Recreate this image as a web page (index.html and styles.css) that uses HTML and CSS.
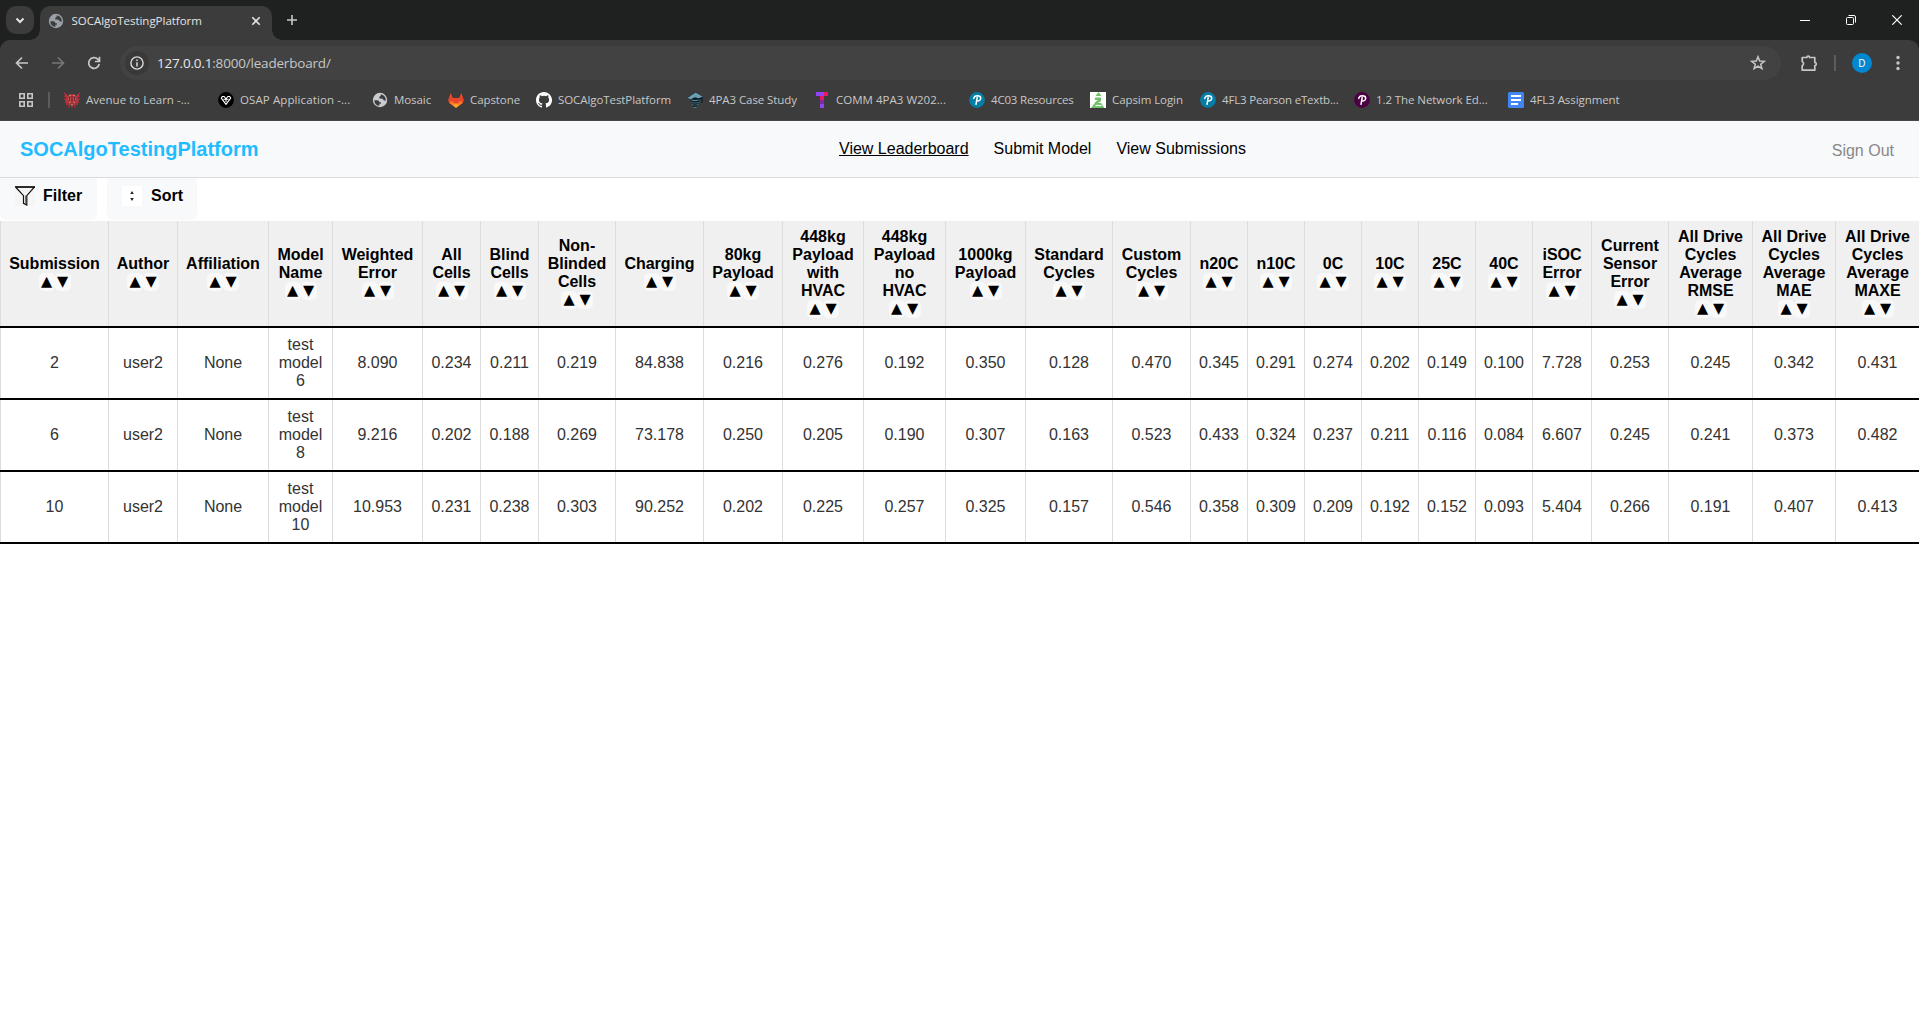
FILE: index.html
```html
<!DOCTYPE html>
<html lang="en">
<head>
<meta charset="utf-8">
<title>SOCAlgoTestingPlatform</title>
<link rel="stylesheet" href="styles.css">
</head>
<body>
<svg class="defs" width="0" height="0">
  <symbol id="globe" viewBox="0 0 16 16"><circle cx="8" cy="8" r="7.2" fill="currentColor"/><path d="M2.200 8.200h2.900q2.300 0 2.300 2.100h1.500v1.500H7.400v2Q2.800 13.500 2.200 8.200zM8.800 2.200v1.100q0 1.400-1.500 1.500v1.700h2.500q1.400 0 1.600 1.600l2.300.8Q14.400 3.800 8.800 2.200z" fill="#3c3c3c"/></symbol>
  <symbol id="pearson" viewBox="0 0 16 16"><circle cx="8" cy="8" r="7.900" fill="currentColor"/><path d="M4.800 6.500c.3-2 1.700-2.700 3.500-2.700 2.100 0 3.400.8 3.400 2.500 0 1.900-1.700 2.900-3.800 2.800M8.200 5.500 7 12.300" fill="none" stroke="#fff" stroke-width="1.500" stroke-linecap="round"/></symbol>
</svg>

<div class="browser">
  <div class="tabstrip">
    <div class="tab-search"><svg width="28" height="28"><path d="m10.500 12.500 3.500 3.500 3.500-3.500" fill="none" stroke="#e3e3e3" stroke-width="2"/></svg></div>
    <div class="tab">
      <svg class="tab-icon" width="16" height="16"><use href="#globe"/></svg>
      <span class="tab-title">SOCAlgoTestingPlatform</span>
      <svg class="tab-close" width="10" height="10"><path d="m1.300 1.300 7.400 7.400m0-7.400-7.400 7.400" stroke="#e3e3e3" stroke-width="1.600"/></svg>
    </div>
    <svg class="new-tab" width="12" height="12"><path d="M6 1v10M1 6h10" stroke="#c7c7c7" stroke-width="1.600"/></svg>
    <div class="window-controls">
      <svg width="10" height="10"><path d="M0 5.500h10" stroke="#fff"/></svg>
      <svg width="10" height="10" fill="none" stroke="#fff"><rect x=".5" y="2.500" width="7" height="7" rx="1"/><path d="M2.500.5H8q1.500 0 1.500 1.500v5.500"/></svg>
      <svg width="10" height="10"><path d="m.3.300 9.400 9.400m0-9.400-9.400 9.400" stroke="#fff" stroke-width="1.200"/></svg>
    </div>
  </div>
  <div class="toolbar">
    <svg class="tool back" width="14" height="14" fill="none" stroke="#c7c7c7" stroke-width="1.700"><path d="M13 7H2M7 1.500 1.500 7 7 12.500"/></svg>
    <svg class="tool forward" width="14" height="14" fill="none" stroke="#777" stroke-width="1.700"><path d="M1 7h11M7 1.500 12.500 7 7 12.500"/></svg>
    <svg class="tool reload" width="14" height="14" fill="none" stroke="#c7c7c7" stroke-width="1.700"><path d="M12.200 8A5.300 5.300 0 1 1 10.900 3.400L12.300 5M12.500.8V5.500H8"/></svg>
    <div class="address">
      <div class="info"><svg width="14" height="14"><circle cx="7" cy="7" r="6.100" fill="none" stroke="#dadada" stroke-width="1.400"/><path d="M7 6.200v4.200M7 3.600v1.500" stroke="#dadada" stroke-width="1.500"/></svg></div>
      <span class="url"><span class="host">127.0.0.1</span>:8000/leaderboard/</span>
      <svg class="star" width="16" height="16"><path d="m8 1.700 1.700 4.300 4.600.3-3.600 2.900 1.200 4.500L8 11.200l-3.900 2.500 1.200-4.500L1.700 6.300 6.300 6z" fill="none" stroke="#c7c7c7" stroke-width="1.500"/></svg>
    </div>
    <svg class="puzzle" width="18" height="18"><path d="M2.200 3.500h4.600a1.400 1.400 0 0 1 2.800 0h5.200v5a1.400 1.400 0 0 1 0 3v4.700H2.200v-4.500a2.300 2.300 0 0 0 0-4.200z" fill="none" stroke="#c7c7c7" stroke-width="1.700" stroke-linejoin="round"/></svg>
    <span class="divider"></span>
    <span class="avatar">D</span>
    <svg class="kebab" width="4" height="16" fill="#c7c7c7"><circle cx="2" cy="2.500" r="1.700"/><circle cx="2" cy="8" r="1.700"/><circle cx="2" cy="13.500" r="1.700"/></svg>
  </div>
  <div class="bookmarks">
    <svg class="apps" width="14" height="14" fill="none" stroke="#c7c7c7" stroke-width="1.600"><path d="M.8.800h4.400v4.400H.8zM8.800.800h4.400v4.400H8.800zM.8 8.800h4.400v4.400H.8zM8.800 8.800h4.400v4.400H8.800z"/></svg>
    <span class="divider"></span>
    <div class="bookmark wide"><svg width="16" height="16"><path d="M1 1l3 3 2-2h4l2 2 3-3v4l-2 1 2 2-1 4-3-1 1 3-3-1-1 1-1-1-3 1 1-3-3 1-1-4 2-2-2-1z" fill="#a83b40"/><path d="M0 1l3 2M16 1l-3 2M0 4l3 1M16 4l-3 1M0 7h3M13 7h3M1 10h2M13 10h2M2 13l3-2M14 13l-3-2M5 16v-2M11 16v-2M8 16v-2" stroke="#d3233d"/><path d="M5 3.500h2M9 3.500h2M4 7h3M9 7h3M5 10h6M7 13h2" stroke="#dc7950"/><path d="M5.500 5v4M10.500 5v4M8 4v8" stroke="#7a2133"/></svg><span>Avenue to Learn -...</span></div>
    <div class="bookmark wider"><svg width="16" height="16"><circle cx="8" cy="8" r="7.900" fill="#000"/><path d="M4.300 4.500h1.900L8 7l1.800-2.500h1.900l1 1.600L8 12.400 3.300 6.100zM5.500 7.200h5M8 7v3" fill="none" stroke="#fff" stroke-width="1.100" stroke-linejoin="round"/></svg><span>OSAP Application -...</span></div>
    <div class="bookmark light"><svg width="16" height="16"><use href="#globe"/></svg><span>Mosaic</span></div>
    <div class="bookmark"><svg width="16" height="16"><path d="M2.700 1 .2 7.800Q0 9.500 1.500 11L8 15.800l6.500-4.800q1.500-1.500 1.300-3.200L13.300 1l-2.200 5H4.900z" fill="#e9472b"/><path d="m3.500 8.900 4.500 3.400 4.500-3.400 2.300 2L8 15.800l-6.800-4.900z" fill="#fb7b27"/><path d="m8 11.200 3.200 2.300L8 15.800l-3.200-2.300z" fill="#fca326"/></svg><span>Capstone</span></div>
    <div class="bookmark repo"><svg width="16" height="16"><path d="M8 0C3.580 0 0 3.580 0 8c0 3.540 2.290 6.530 5.470 7.590.4.070.55-.17.55-.38 0-.19-.01-.82-.01-1.490-2.010.37-2.530-.49-2.690-.94-.09-.23-.48-.94-.82-1.130-.28-.15-.68-.52-.01-.53.63-.01 1.080.58 1.230.82.72 1.210 1.870.87 2.330.66.07-.52.28-.87.51-1.070-1.780-.2-3.640-.89-3.640-3.950 0-.87.31-1.590.82-2.150-.08-.2-.36-1.020.08-2.120 0 0 .67-.21 2.200.82a7.600 7.600 0 0 1 4 0c1.530-1.040 2.200-.82 2.200-.82.44 1.100.16 1.920.08 2.120.51.56.82 1.270.82 2.150 0 3.070-1.870 3.750-3.650 3.950.29.25.54.73.54 1.480 0 1.070-.01 1.930-.01 2.200 0 .21.15.46.55.38A8 8 0 0 0 8 0" fill="#fff"/></svg><span>SOCAlgoTestPlatform</span></div>
    <div class="bookmark"><svg width="16" height="16"><path d="m0 6 9-6 7 5-1 2-3 .5V11H4V7.500z" fill="#0b1d25"/><path d="M.3 6 8.800.5l6.900 4.300-4 1.500-4-1-3.700 2z" fill="#6d9fb3"/><path d="M4.500 8q3.500 1.300 7 0M4.500 10.300q3.500 1.300 7 0M5 12.500q3 1.300 6 0M6.500 14.800q1.500.7 3 0" fill="none" stroke="#5591aa" stroke-width="1.300"/><path d="M4.500 9.300q3.500 1.300 7 0M5 11.500q3 1.300 6 0M6 13.700q2 1 4 0" fill="none" stroke="#0b1d25" stroke-width="1.300"/><path d="M15 6v5" stroke="#13262d" stroke-width="1.500"/></svg><span>4PA3 Case Study</span></div>
    <div class="bookmark wide"><svg width="16" height="16"><path fill="#8f45f2" d="M2 0h9v4H2zM6 12h4v4H6z"/><path fill="#e91768" d="M10 0h4v4h-4zM6 4h4v4H6z"/><path fill="#7b2ca5" d="M6 8h4v4H6z"/></svg><span>COMM 4PA3 W202...</span></div>
    <div class="bookmark blue tight"><svg width="16" height="16"><use href="#pearson"/></svg><span>4C03 Resources</span></div>
    <div class="bookmark"><svg width="16" height="16"><path fill="#fff" d="M0 0h16v16H0z"/><path fill="#6cc169" d="m8.500 0 3 4h-6zM5 5.500h6V9l-3 2h3l3.500 5H1l4.500-6L8 8H5z"/><path d="M5.500 13.500h6" stroke="#fff" stroke-width="1.200"/></svg><span>Capsim Login</span></div>
    <div class="bookmark blue tight"><svg width="16" height="16"><use href="#pearson"/></svg><span>4FL3 Pearson eTextb...</span></div>
    <div class="bookmark plum"><svg width="16" height="16"><use href="#pearson"/></svg><span>1.2 The Network Ed...</span></div>
    <div class="bookmark"><svg width="16" height="16"><rect width="16" height="16" rx="1.500" fill="#4285f4"/><path d="M3 4h10M3 8h10M3 12h7" stroke="#fff" stroke-width="2"/></svg><span>4FL3 Assignment</span></div>
  </div>
</div>

<header class="site-header">
  <a class="brand">SOCAlgoTestingPlatform</a>
  <nav><a class="active">View Leaderboard</a><a>Submit Model</a><a>View Submissions</a></nav>
  <a class="sign-out">Sign Out</a>
</header>
<div class="controls">
  <button class="filter"><svg width="20" height="20"><path fill="#f5f5f5" d="M0 0h20v20H0z"/><path d="M.5 1h19l-7.700 8.700V19l-3.300-1.600V9.700L1 1.500" fill="none" stroke="#111" stroke-width="1.200"/><path d="M10.500 9.500v8.500" stroke="#777"/><path d="M0 1h20" stroke="#111" stroke-width="1.500"/></svg><span>Filter</span></button>
  <button class="sort"><svg width="20" height="20"><path fill="#fff" d="M0 0h20v20H0z"/><path d="m10 5 1.800 3H8.200zM8.200 12h3.600L10 15z" fill="#222"/></svg><span>Sort</span></button>
</div>
<table>
  <colgroup id="cols"></colgroup>
  <thead><tr id="head"></tr></thead>
  <tbody id="rows"></tbody>
</table>
<script src="table.js"></script>
</body>
</html>
```
FILE: table.js
```js
const columns = [
  ["Submission", 108], ["Author", 69], ["Affiliation", 91], ["Model|Name", 64],
  ["Weighted|Error", 90], ["All|Cells", 58], ["Blind|Cells", 58], ["Non-|Blinded|Cells", 77],
  ["Charging", 88], ["80kg|Payload", 79], ["448kg|Payload|with|HVAC", 81], ["448kg|Payload|no|HVAC", 82],
  ["1000kg|Payload", 80], ["Standard|Cycles", 87], ["Custom|Cycles", 78], ["n20C", 57],
  ["n10C", 57], ["0C", 57], ["10C", 57], ["25C", 57], ["40C", 57], ["iSOC|Error", 59],
  ["Current|Sensor|Error", 77], ["All Drive|Cycles|Average|RMSE", 84],
  ["All Drive|Cycles|Average|MAE", 83], ["All Drive|Cycles|Average|MAXE", 84]
];
const rows = [
  "2,user2,None,test|model|6,8.090,0.234,0.211,0.219,84.838,0.216,0.276,0.192,0.350,0.128,0.470,0.345,0.291,0.274,0.202,0.149,0.100,7.728,0.253,0.245,0.342,0.431",
  "6,user2,None,test|model|8,9.216,0.202,0.188,0.269,73.178,0.250,0.205,0.190,0.307,0.163,0.523,0.433,0.324,0.237,0.211,0.116,0.084,6.607,0.245,0.241,0.373,0.482",
  "10,user2,None,test|model|10,10.953,0.231,0.238,0.303,90.252,0.202,0.225,0.257,0.325,0.157,0.546,0.358,0.309,0.209,0.192,0.152,0.093,5.404,0.266,0.191,0.407,0.413"
];
const lines = text => text.split("|").join("<br>");
document.getElementById("cols").innerHTML =
  columns.map(([, width]) => `<col style="width:${width}px">`).join("");
document.getElementById("head").innerHTML = columns.map(([label]) =>
  `<th>${lines(label)}<div class="sorters"><button>▲</button><button>▼</button></div></th>`).join("");
document.getElementById("rows").innerHTML = rows.map(row =>
  `<tr>${row.split(",").map(cell => `<td>${lines(cell)}</td>`).join("")}</tr>`).join("");
```
FILE: styles.css
```css
* { box-sizing: border-box; }
body {
  margin: 0;
  background: #fff;
  font: 16px/18px "Liberation Sans", Arial, sans-serif;
  color: #333;
  overflow: hidden;
}
svg { display: block; flex: none; }
.defs { position: absolute; }
button { border: 0; margin: 0; font: inherit; color: #000; }

/* Browser frame */
.browser {
  height: 121px;
  background: #1f2120;
  color: #c7c7c7;
  font-family: "Open Sans", "Noto Sans", sans-serif;
  white-space: nowrap;
}
.tabstrip { display: flex; height: 40px; padding-left: 6px; }
.tab-search { width: 28px; height: 28px; margin-top: 6px; border-radius: 10px; background: #3c3c3c; }
.tab {
  position: relative;
  display: flex;
  align-items: center;
  width: 232px;
  height: 34px;
  margin: 6px 0 0 6px;
  padding: 0 11px 5px 8px;
  border-radius: 10px 10px 0 0;
  background: #3c3c3c;
}
.tab::before, .tab::after {
  content: "";
  position: absolute;
  bottom: 0;
  width: 10px;
  height: 10px;
}
.tab::before { left: -10px; background: radial-gradient(circle at 0 0, transparent 9.5px, #3c3c3c 10px); }
.tab::after { right: -10px; background: radial-gradient(circle at 100% 0, transparent 9.5px, #3c3c3c 10px); }
.tab-icon { color: #9aa0a6; }
.tab-title { flex: 1; margin-left: 7.5px; font-size: 11.5px; letter-spacing: -.02px; color: #e3e3e3; }
.new-tab { margin: 14px 0 0 14px; }
.window-controls { display: flex; gap: 36px; margin: 15px 17px 0 auto; }
.toolbar {
  display: flex;
  align-items: center;
  height: 46px;
  background: #3c3c3c;
  border-radius: 10px 10px 0 0;
}
.back { margin-left: 15px; }
.forward { margin-left: 22px; }
.reload { margin-left: 22px; }
.address {
  display: flex;
  align-items: center;
  width: 1661px;
  height: 34px;
  margin-left: 19px;
  padding: 0 15px 0 5px;
  border-radius: 17px;
  background: #424242;
}
.info { display: grid; place-items: center; width: 24px; height: 24px; border-radius: 50%; background: #393939; }
.url { flex: 1; margin-left: 8px; font-size: 13.5px; letter-spacing: -.19px; }
.host { color: #e8e8e8; }
.puzzle { margin-left: 19px; }
.divider { flex: none; width: 2px; height: 16px; background: #5c5c5c; }
.toolbar .divider { margin-left: 16px; }
.avatar {
  width: 20px;
  height: 20px;
  margin-left: 16px;
  border-radius: 50%;
  background: #0288d1;
  color: #fff;
  font-size: 10px;
  line-height: 20px;
  text-align: center;
}
.kebab { margin-left: 24px; }
.bookmarks {
  display: grid;
  grid-template-columns: 29px 16px 154px 154px 76px 88px 151px 127px 155px 121px 110px 154px 154px 140px;
  align-items: center;
  height: 35px;
  padding: 0 0 7px 19px;
  background: #3c3c3c;
  border-bottom: 1px solid #484848;
}
.bookmark { display: flex; align-items: center; gap: 6px; font-size: 11.5px; letter-spacing: -.08px; }
.wide { letter-spacing: .02px; }
.wider { letter-spacing: .1px; }
.tight { letter-spacing: -.18px; }
.light svg { color: #c8cbd0; }
.blue svg { color: #067da4; }
.plum svg { color: #4b0042; }

/* Site */
.site-header {
  display: grid;
  grid-template-columns: 819px auto 1fr;
  align-items: center;
  height: 57px;
  padding: 0 25px 0 20px;
  background: #f8f9fb;
  border-bottom: 1px solid #dadcdf;
}
.brand { font-size: 20px; line-height: 24px; font-weight: bold; color: #1fbcff; }
nav { display: flex; gap: 25px; color: #000; }
.active { text-decoration: underline; }
.sign-out { justify-self: end; margin-top: 3px; color: #888; }
.controls { display: flex; gap: 10px; height: 43px; }
.controls button {
  display: flex;
  align-items: flex-start;
  height: 42px;
  padding: 8px 15px;
  border-radius: 0 0 6px 6px;
  background: #f8f9fb;
  font-weight: bold;
}
.controls span { padding-top: 1px; }
.filter { width: 97px; gap: 8px; }
.sort { width: 90px; gap: 9px; }

table { width: 1919px; table-layout: fixed; border-spacing: 0; text-align: center; }
th, td {
  padding: 8px 0 8px 1px;
  border-bottom: 2px solid #000;
  box-shadow: inset 1px 0 #ddd;
  vertical-align: middle;
}
th { height: 107px; padding-top: 7px; background: #f0f0f0; color: #000; }
td { height: 72px; }
.sorters { display: flex; justify-content: center; height: 18px; }
.sorters button {
  display: flex;
  justify-content: center;
  width: 16px;
  height: 18px;
  padding: 0;
  border-radius: 5px;
  background: #f9f9f9;
  font: 14.5px/16px "DejaVu Sans", sans-serif;
}
```
